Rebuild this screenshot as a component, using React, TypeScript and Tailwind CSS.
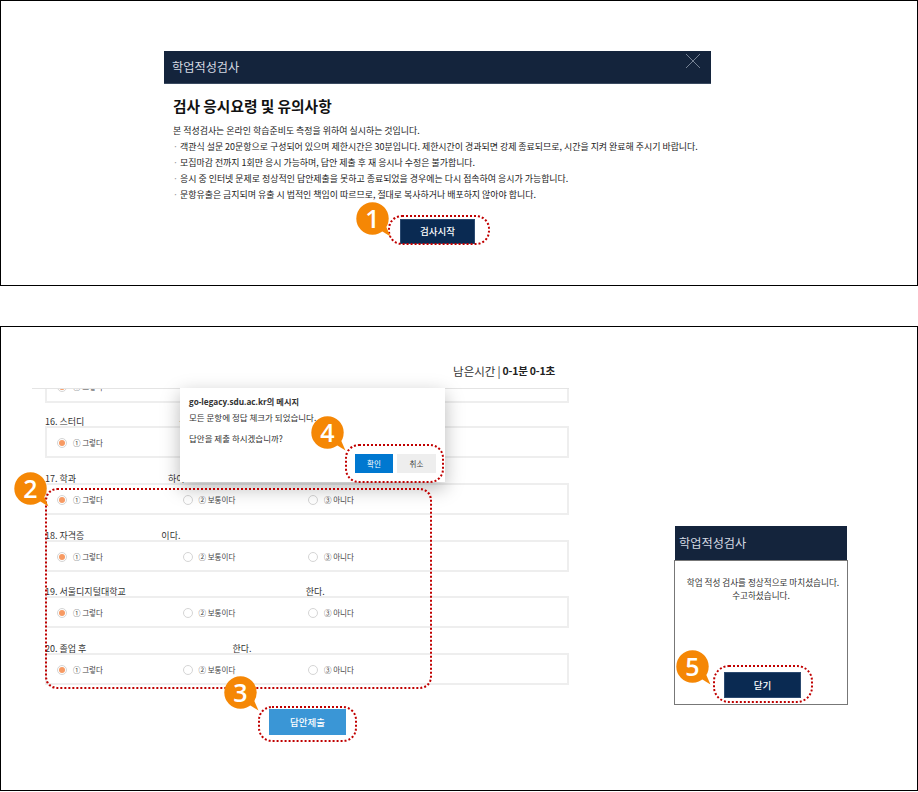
const FONT = '[font-family:"Noto_Sans_CJK_KR","Noto_Sans",sans-serif]';

function Callout({ n, className }: { n: number; className: string }) {
  return (
    <div className={`absolute w-[35px] h-[35px] ${className}`}>
      <svg width="35" height="35" viewBox="0 0 35 35" className="absolute left-0 top-0">
        <circle cx="16.5" cy="16.5" r="16.2" fill="#f58705" />
        <path d="M24 28 L34.5 34.5 L29 22 Z" fill="#f58705" />
      </svg>
      <span className="absolute left-0 top-0 w-[33px] h-[33px] flex items-center justify-center text-white font-semibold text-[25px] leading-none [font-family:'Open_Sans',sans-serif]">
        {n}
      </span>
    </div>
  );
}

function Dotted({ className }: { className: string }) {
  return <div className={`absolute border-[2px] border-dotted border-[#c00000] ${className}`} />;
}

const notes = [
  '객관식 설문 20문항으로 구성되어 있으며 제한시간은 30분입니다. 제한시간이 경과되면 강제 종료되므로, 시간을 지켜 완료해 주시기 바랍니다.',
  '모집마감 전까지 1회만 응시 가능하며, 답안 제출 후 재 응시나 수정은 불가합니다.',
  '응시 중 인터넷 문제로 정상적인 답안제출을 못하고 종료되었을 경우에는 다시 접속하여 응시가 가능합니다.',
  '문항유출은 금지되며 유출 시 법적인 책임이 따르므로, 절대로 복사하거나 배포하지 않아야 합니다.',
];

function Radio({ on }: { on?: boolean }) {
  return (
    <span className="w-[10px] h-[10px] rounded-full border border-[#d5d5d5] flex items-center justify-center shrink-0">
      {on && <span className="w-[6px] h-[6px] rounded-full bg-[#f79a63]" />}
    </span>
  );
}

function Options({ first }: { first?: boolean }) {
  const items = ['① 그렇다', '② 보통이다', '③ 아니다'];
  return (
    <div className="h-[32px] border-2 border-[#eeeeee] flex items-center pl-[10px] pt-[1px] text-[7.5px] text-[#444]">
      {items.map((t, i) =>
        first && i > 0 ? null : (
          <div key={t} className="w-[125.5px] flex items-center gap-[6px]">
            <Radio on={i === 0} />
            <span>{t}</span>
          </div>
        ),
      )}
    </div>
  );
}

function Question({ label, tail, gap, first, mt }: { label: string; tail?: string; gap?: string; first?: boolean; mt: string }) {
  return (
    <div className={mt}>
      <div className="h-[14px] pt-[6px] flex items-center text-[9px] text-[#333] whitespace-nowrap">
        <span>{label}</span>
        {tail && <span className={gap}>{tail}</span>}
      </div>
      <Options first={first} />
    </div>
  );
}

export default function App() {
  return (
    <div className={`w-[918px] h-[792px] bg-white relative overflow-hidden ${FONT}`}>
      <section className="h-[286px] border border-black relative">
        <div className="w-[547px] ml-[163px] mt-[50px]">
          <div className="h-[33px] bg-[#14243c] border-b border-[#3a4a60] flex items-center justify-between pl-[8px] pr-[10px]">
            <span className="text-[12.2px] text-[#d5dae2]">학업적성검사</span>
            <svg width="16" height="16" viewBox="0 0 16 16" className="mb-[12px]">
              <path d="M1 1 L15 15 M15 1 L1 15" stroke="#8f9bab" strokeWidth="0.8" fill="none" />
            </svg>
          </div>
          <div className="pl-[9px]">
            <h1 className="mt-[12px] text-[14.7px] leading-[20px] font-bold text-[#111]">검사 응시요령 및 유의사항</h1>
            <ul className="mt-[7px] text-[8.95px] leading-[16px] text-[#222] whitespace-nowrap">
              <li>본 적성검사는 온라인 학습준비도 측정을 위하여 실시하는 것입니다.</li>
              {notes.map((t) => (
                <li key={t} className="flex">
                  <span className="w-[7px] text-[#999]">·</span>
                  <span>{t}</span>
                </li>
              ))}
            </ul>
          </div>
          <button className="block ml-[236px] mt-[16px] w-[75px] h-[25px] bg-[#0a2a52] border border-[#2c4a70] text-white text-[9.5px] font-medium">
            검사시작
          </button>
        </div>
        <Dotted className="left-[387px] top-[214px] w-[102px] h-[30px] rounded-[14px]" />
        <Callout n={1} className="left-[355px] top-[201px]" />
      </section>

      <section className="mt-[40px] h-[465px] border border-black relative flex">
        <div className="w-[568px] shrink-0">
          <div className="h-[61px] pr-[14px] flex items-end justify-end pb-[9px] text-[11.5px] text-[#333] leading-[16px]">
            <span>남은시간</span>
            <span className="mx-[2px]">|</span>
            <b className="text-[#222] text-[10.5px] tracking-[-0.2px]">0-1분 0-1초</b>
          </div>
          <div className="ml-[31px] border-t border-[#e4e4e4]" />
          <div className="ml-[44px] w-[524px]">
            <div className="h-[14px] border-2 border-t-0 border-[#eeeeee] pl-[10px] overflow-hidden">
              <div className="-mt-[7px] flex items-center gap-[6px] text-[7.5px] leading-[10px] text-[#444]">
                <Radio on />
                <span>① 그렇다</span>
              </div>
            </div>
            <Question mt="mt-[9px]" label="16. 스터디" tail="를" gap="ml-[95px]" first />
            <Question mt="mt-[11px]" label="17. 학과" tail="하이" gap="ml-[92px]" />
            <Question mt="mt-[11px]" label="18. 자격증" tail="이다." gap="ml-[77px]" />
            <Question mt="mt-[10px]" label="19. 서울디지털대학교" tail="한다." gap="ml-[180px]" />
            <Question mt="mt-[11px]" label="20. 졸업 후" tail="한다." gap="ml-[146px]" />
          </div>
          <button className="block ml-[268px] mt-[24px] w-[77px] h-[26px] bg-[#3a96d6] text-white text-[9.5px] font-medium">
            답안제출
          </button>
        </div>

        <div className="ml-[105px] mt-[199px] w-[174px] h-[180px]">
          <div className="ml-px w-[172px] h-[34px] bg-[#14243c] flex items-center pl-[4px] text-[12.2px] text-[#d5dae2]">
            학업적성검사
          </div>
          <div className="h-[145px] border border-[#777] pt-[15px] text-center text-[8.6px] leading-[13px] text-[#333] flex flex-col">
            <p className="pl-[4px]">학업 적성 검사를 정상적으로 마치셨습니다.</p>
            <p>수고하셨습니다.</p>
            <button className="block ml-[49px] mt-[70px] w-[77px] h-[26px] bg-[#0a2a52] border border-[#2c4a70] text-white text-[9.5px] font-medium">
              닫기
            </button>
          </div>
        </div>

        <div className="absolute left-[179px] top-[61px] w-[265px] h-[94px] bg-white shadow-[0_6px_18px_rgba(0,0,0,0.28)] pl-[9px] pr-[9px] text-[8.5px] text-[#333]">
          <p className="mt-[7px] leading-[13px] text-[8.2px] font-bold [font-family:'Open_Sans','Noto_Sans_CJK_KR',sans-serif]">go-legacy.sdu.ac.kr의 메시지</p>
          <p className="mt-[3px] leading-[13px]">모든 문항에 정답 체크가 되었습니다.</p>
          <p className="mt-[8px] leading-[13px]">답안을 제출 하시겠습니까?</p>
          <div className="mt-[9px] flex justify-end gap-[4px]">
            <button className="w-[38px] h-[19px] bg-[#0078d0] text-white text-[7.5px]">확인</button>
            <button className="w-[39px] h-[19px] bg-[#eeeeee] text-[#444] text-[7.5px]">취소</button>
          </div>
        </div>

        <Dotted className="left-[44px] top-[161px] w-[387px] h-[201px] rounded-[12px]" />
        <Dotted className="left-[344px] top-[117px] w-[99px] h-[39px] rounded-[14px]" />
        <Dotted className="left-[257px] top-[379px] w-[99px] h-[36px] rounded-[14px]" />
        <Dotted className="left-[712px] top-[338px] w-[100px] h-[38px] rounded-[16px]" />
        <Callout n={2} className="left-[13px] top-[145px]" />
        <Callout n={3} className="left-[223px] top-[349px]" />
        <Callout n={4} className="left-[310px] top-[89px]" />
        <Callout n={5} className="left-[675px] top-[323px]" />
      </section>
    </div>
  );
}
